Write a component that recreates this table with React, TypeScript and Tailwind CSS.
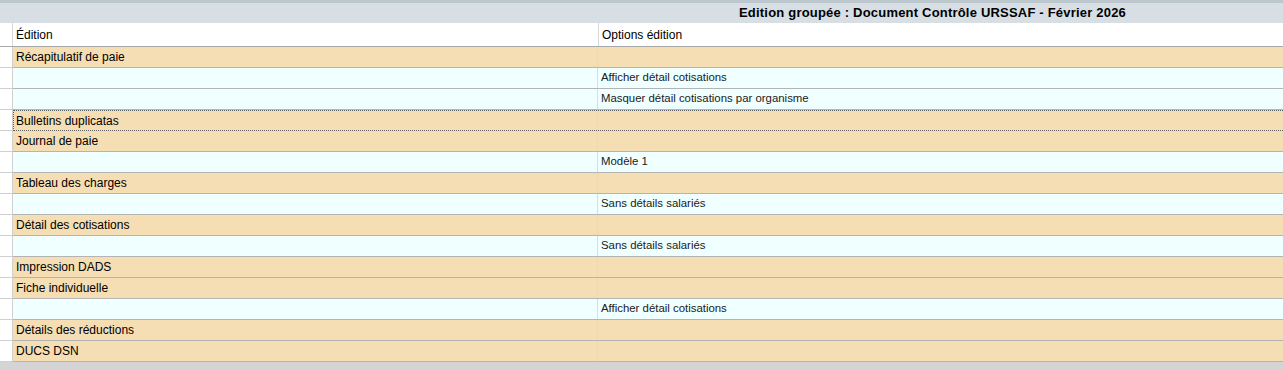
const rows: { label: string; option?: string; group: boolean }[] = [
  { label: 'Récapitulatif de paie', group: true },
  { label: '', option: 'Afficher détail cotisations', group: false },
  { label: '', option: 'Masquer détail cotisations par organisme', group: false },
  { label: 'Bulletins duplicatas', group: true },
  { label: 'Journal de paie', group: true },
  { label: '', option: 'Modèle 1', group: false },
  { label: 'Tableau des charges', group: true },
  { label: '', option: 'Sans détails salariés', group: false },
  { label: 'Détail des cotisations', group: true },
  { label: '', option: 'Sans détails salariés', group: false },
  { label: 'Impression DADS', group: true },
  { label: 'Fiche individuelle', group: true },
  { label: '', option: 'Afficher détail cotisations', group: false },
  { label: 'Détails des réductions', group: true },
  { label: 'DUCS DSN', group: true },
]

const SELECTED = 3

export default function App() {
  return (
    <div
      className="w-[1283px] h-[370px] overflow-hidden bg-[#d4d4d4] text-black"
      style={{ fontFamily: '"Liberation Sans", Arial, sans-serif' }}
    >
      {/* title bar */}
      <div className="h-[23px] border-t-[3px] border-[#bcc6cd] bg-[#d7dfe5] flex items-center justify-end pr-[157px]">
        <span className="text-[13px] font-bold tracking-[0.2px]">
          Edition groupée : Document Contrôle URSSAF - Février 2026
        </span>
      </div>

      {/* column headers */}
      <div className="flex h-[24px] bg-white border-b border-[#a8a8a8] text-[12px]">
        <div className="w-[13px] shrink-0 border-r border-[#d8d8d8]" />
        <div className="w-[586px] shrink-0 border-r border-[#d8d8d8] pl-[3px] flex items-center">Édition</div>
        <div className="flex-1 pl-[3px] flex items-center">Options édition</div>
      </div>

      {/* rows */}
      {rows.map((r, i) => {
        const sel = i === SELECTED
        return (
          <div key={i} className="flex h-[21px]">
            <div className="w-[13px] shrink-0 bg-white border-r border-b border-[#d0d0d0]" />
            <div
              className={`flex flex-1 ${r.group ? 'bg-[#f5deb3]' : 'bg-[#f0ffff]'} ${
                sel
                  ? 'border-y border-l border-dotted border-[#606060]'
                  : 'border-b border-[#b4b4b4]'
              }`}
            >
              <div
                className={`${sel ? 'w-[584px] pl-[2px]' : 'w-[585px] pl-[3px]'} shrink-0 border-r border-[#dcdcdc] flex items-center text-[12px]`}
              >
                {r.label}
              </div>
              <div className="flex-1 pl-[3px] flex items-center text-[11.4px] text-[#202020]">{r.option}</div>
            </div>
          </div>
        )
      })}
    </div>
  )
}
